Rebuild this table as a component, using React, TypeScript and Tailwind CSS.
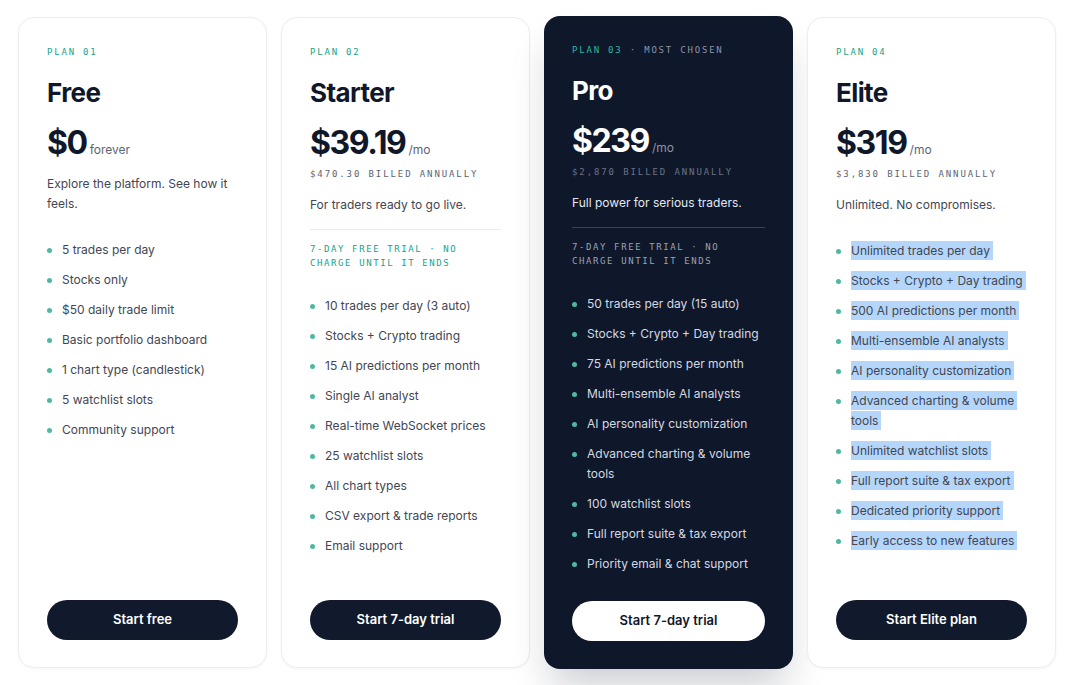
import React from "react";

type Plan = {
  label: string;
  extra?: string;
  name: string;
  price: string;
  unit: string;
  billed?: string;
  desc: string;
  trial?: boolean;
  features: string[];
  cta: string;
  dark?: boolean;
  selected?: boolean;
};

const plans: Plan[] = [
  {
    label: "PLAN 01",
    name: "Free",
    price: "$0",
    unit: "forever",
    desc: "Explore the platform. See how it feels.",
    features: [
      "5 trades per day",
      "Stocks only",
      "$50 daily trade limit",
      "Basic portfolio dashboard",
      "1 chart type (candlestick)",
      "5 watchlist slots",
      "Community support",
    ],
    cta: "Start free",
  },
  {
    label: "PLAN 02",
    name: "Starter",
    price: "$39.19",
    unit: "/mo",
    billed: "$470.30 BILLED ANNUALLY",
    desc: "For traders ready to go live.",
    trial: true,
    features: [
      "10 trades per day (3 auto)",
      "Stocks + Crypto trading",
      "15 AI predictions per month",
      "Single AI analyst",
      "Real-time WebSocket prices",
      "25 watchlist slots",
      "All chart types",
      "CSV export & trade reports",
      "Email support",
    ],
    cta: "Start 7-day trial",
  },
  {
    label: "PLAN 03",
    extra: " · MOST CHOSEN",
    name: "Pro",
    price: "$239",
    unit: "/mo",
    billed: "$2,870 BILLED ANNUALLY",
    desc: "Full power for serious traders.",
    trial: true,
    features: [
      "50 trades per day (15 auto)",
      "Stocks + Crypto + Day trading",
      "75 AI predictions per month",
      "Multi-ensemble AI analysts",
      "AI personality customization",
      "Advanced charting & volume tools",
      "100 watchlist slots",
      "Full report suite & tax export",
      "Priority email & chat support",
    ],
    cta: "Start 7-day trial",
    dark: true,
  },
  {
    label: "PLAN 04",
    name: "Elite",
    price: "$319",
    unit: "/mo",
    billed: "$3,830 BILLED ANNUALLY",
    desc: "Unlimited. No compromises.",
    features: [
      "Unlimited trades per day",
      "Stocks + Crypto + Day trading",
      "500 AI predictions per month",
      "Multi-ensemble AI analysts",
      "AI personality customization",
      "Advanced charting & volume tools",
      "Unlimited watchlist slots",
      "Full report suite & tax export",
      "Dedicated priority support",
      "Early access to new features",
    ],
    cta: "Start Elite plan",
    selected: true,
  },
];

const mono = { fontFamily: '"DejaVu Sans Mono", "Liberation Mono", monospace' };

function Card({ p }: { p: Plan }) {
  const dark = !!p.dark;
  return (
    <div
      className={
        "flex w-[249px] shrink-0 flex-col rounded-[16px] px-[28px] pt-[27px] " +
        (dark
          ? "-mt-px h-[653px] pb-[28px] bg-[#0f172a] shadow-[0_24px_40px_-8px_rgba(15,23,42,0.22)]"
          : "h-[651px] pb-[27px] border border-[#ededf0] bg-white shadow-[0_1px_3px_rgba(15,23,42,0.04)]")
      }
    >
      <div className="text-[9px] leading-[14px] tracking-[1.8px]" style={mono}>
        <span className={dark ? "text-[#2fb8a3]" : "text-[#14a38b]"}>{p.label}</span>
        {p.extra && <span className="text-[#8c95a6]">{p.extra}</span>}
      </div>
      <div
        className={
          "mt-[18px] text-[26px] font-bold leading-[32px] tracking-[-0.6px] " +
          (dark ? "text-white" : "text-[#0f172a]")
        }
      >
        {p.name}
      </div>
      <div className="mt-[16px] flex items-baseline">
        <span
          className={
            "text-[32px] font-bold leading-[36px] tracking-[-1.4px] " +
            (dark ? "text-white" : "text-[#0f172a]")
          }
        >
          {p.price}
        </span>
        <span className={"ml-[3px] text-[12px] " + (dark ? "text-[#8c95a6]" : "text-[#5b6474]")}>
          {p.unit}
        </span>
      </div>
      {p.billed && (
        <div
          className={
            "mt-[6px] text-[9px] leading-[14px] tracking-[1.9px] " +
            (dark ? "text-[#6b7486]" : "text-[#5b6474]")
          }
          style={mono}
        >
          {p.billed}
        </div>
      )}
      <div
        className={
          "text-[12px] leading-[20px] " +
          (p.billed ? "mt-[14px] " : "mt-[13px] ") +
          (dark ? "text-[#e2e8f0]" : "text-[#3f4654]")
        }
      >
        {p.desc}
      </div>
      {p.trial && (
        <div
          className={
            "mt-[14px] border-t pt-[12px] " + (dark ? "border-[#3a4356]" : "border-[#e8eaee]")
          }
        >
          <div
            className={
              "text-[9px] leading-[14px] tracking-[1.6px] " +
              (dark ? "text-[#9aa3b2]" : "text-[#14a38b]")
            }
            style={mono}
          >
            7-DAY FREE TRIAL · NO
            <br />
            CHARGE UNTIL IT ENDS
          </div>
        </div>
      )}
      <ul className="mt-[26px] flex flex-col gap-[10px]">
        {p.features.map((f) => (
          <li key={f} className="flex items-start text-[12px] leading-[20px]">
            <span className="mr-[10px] mt-[8px] h-[5px] w-[5px] shrink-0 rounded-full bg-[#4fb8a2]" />
            <span className={dark ? "text-[#d4d9e1]" : "text-[#3f4654]"}>
              {p.selected ? (
                <span className="bg-[#b5d6fb] py-[2px] pr-[3px] [box-decoration-break:clone]">
                  {f}
                </span>
              ) : (
                f
              )}
            </span>
          </li>
        ))}
      </ul>
      <button
        className={
          "mt-auto h-[40px] w-full shrink-0 rounded-full text-[13px] font-semibold " +
          (dark ? "bg-white text-[#0f172a]" : "bg-[#111a2c] text-white")
        }
      >
        {p.cta}
      </button>
    </div>
  );
}

export default function App() {
  return (
    <div
      className="min-h-[685px] w-[1070px] bg-white pl-[18px] pr-[14px] pt-[17px]"
      style={{ fontFamily: 'Inter, "Noto Sans", sans-serif' }}
    >
      <div className="flex items-start gap-[14px]">
        {plans.map((p) => (
          <Card key={p.name} p={p} />
        ))}
      </div>
    </div>
  );
}
